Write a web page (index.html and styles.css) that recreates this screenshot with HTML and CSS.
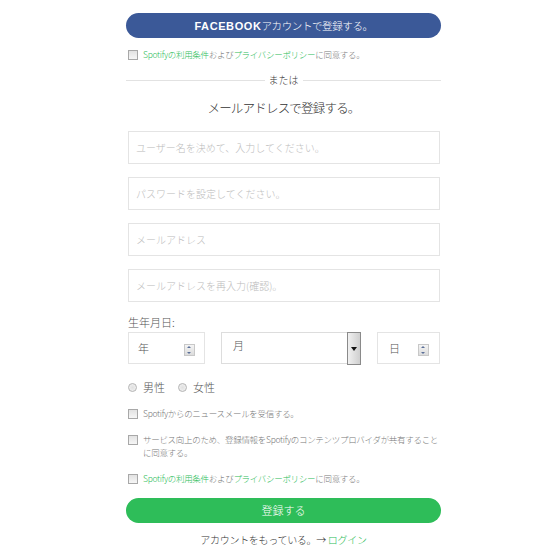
FILE: index.html
```html
<!DOCTYPE html>
<html lang="ja">
<head>
    <meta charset="UTF-8">
    <title>Spotify 登録</title>
    <link rel="stylesheet" href="styles.css">
</head>
<body>
    <div class="signup">
        <div class="btn btn-fb"><b>FACEBOOK</b>アカウントで登録する。</div>

        <div class="check-row first">
            <span class="box"></span>
            <span><a>Spotifyの利用条件</a>および<a>プライバシーポリシー</a>に同意する。</span>
        </div>

        <div class="divider"><span>または</span></div>

        <h1>メールアドレスで登録する。</h1>

        <div class="field">ユーザー名を決めて、入力してください。</div>
        <div class="field">パスワードを設定してください。</div>
        <div class="field">メールアドレス</div>
        <div class="field">メールアドレスを再入力(確認)。</div>

        <div class="dob-label">生年月日:</div>
        <div class="dob">
            <div class="spin year"><span>年</span><i class="spinner"></i></div>
            <div class="select month"><span>月</span><i class="drop"></i></div>
            <div class="spin day"><span>日</span><i class="spinner"></i></div>
        </div>

        <div class="gender">
            <label><span class="radio"></span>男性</label>
            <label><span class="radio"></span>女性</label>
        </div>

        <div class="check-row news">
            <span class="box"></span>
            <span>Spotifyからのニュースメールを受信する。</span>
        </div>
        <div class="check-row share">
            <span class="box"></span>
            <span>サービス向上のため、登録情報をSpotifyのコンテンツプロバイダが共有することに同意する。</span>
        </div>
        <div class="check-row terms">
            <span class="box"></span>
            <span><a>Spotifyの利用条件</a>および<a>プライバシーポリシー</a>に同意する。</span>
        </div>

        <div class="btn btn-green">登録する</div>

        <p class="login">アカウントをもっている。→ <a>ログイン</a></p>
    </div>
</body>
</html>
```

FILE: styles.css
```css
body {
    margin: 0;
    padding: 0 0 0 7px;
    background: #fff;
    font-family: "Noto Sans CJK JP", "Noto Sans", sans-serif;
    font-weight: 300;
    color: #555;
}
.signup {
    width: 315px;
    margin: 0 auto;
    padding-top: 13px;
}
a {
    color: #2ebd59;
}
.btn {
    height: 25px;
    line-height: 25px;
    border-radius: 13px;
    text-align: center;
    color: #fff;
    font-size: 11px;
}
.btn-fb {
    background: #3b5998;
    font-size: 10.5px;
    letter-spacing: -0.4px;
}
.btn-fb b {
    font-family: "Liberation Sans", Arial, sans-serif;
    font-weight: 700;
    font-size: 11px;
    letter-spacing: 0.6px;
}
.btn-green {
    background: #2ebd59;
    margin-top: 13px;
}
.check-row {
    display: flex;
    align-items: flex-start;
    margin-left: 2px;
    font-size: 8.5px;
    letter-spacing: -0.3px;
    line-height: 13px;
    color: #777;
}
.check-row .box {
    flex: none;
    width: 8px;
    height: 8px;
    margin: 2px 5px 0 0;
    border: 1px solid #a8a8a8;
    background: linear-gradient(#e2e2e2, #f6f6f6);
}
.check-row.first {
    margin-top: 10px;
}
.check-row.news {
    margin-top: 13px;
}
.check-row.share {
    margin-top: 13px;
    padding-right: 2px;
}
.check-row.terms {
    margin-top: 13px;
}
.divider {
    position: relative;
    margin-top: 12px;
    height: 13px;
    text-align: center;
    font-size: 10px;
    line-height: 13px;
    color: #333;
}
.divider::before {
    content: "";
    position: absolute;
    left: 0;
    right: 0;
    top: 7px;
    border-top: 1px solid #e2e2e2;
}
.divider span {
    position: relative;
    background: #fff;
    padding: 0 4px;
}
h1 {
    margin: 12px 0 0;
    font-size: 12.5px;
    letter-spacing: -0.8px;
    line-height: 20px;
    font-weight: 300;
    text-align: center;
    color: #333;
}
.field {
    box-sizing: border-box;
    margin: 13px 0 0 2px;
    width: 312px;
    height: 33px;
    line-height: 31px;
    padding-left: 7px;
    border: 1px solid #e4e4e4;
    font-size: 10px;
    color: #bbb;
}
.dob-label {
    margin: 13px 0 0 2px;
    font-size: 11px;
    line-height: 14px;
    color: #555;
}
.dob {
    display: flex;
    gap: 16px;
    margin: 3px 0 0 2px;
}
.spin, .select {
    box-sizing: border-box;
    position: relative;
    height: 32px;
    border: 1px solid #e4e4e4;
    font-size: 11px;
    color: #555;
    line-height: 30px;
}
.spin.year {
    width: 77px;
    padding-left: 9px;
}
.spin.day {
    width: 63px;
    padding-left: 11px;
}
.select.month {
    width: 140px;
    padding-left: 11px;
    border-color: #ddd;
    line-height: 24px;
}
.spinner {
    position: absolute;
    right: 9px;
    top: 11px;
    width: 9px;
    height: 10px;
    border: 1px solid #c8c8c8;
    background: linear-gradient(#f4f4f4, #dcdcdc);
}
.spin.day .spinner {
    right: 10px;
}
.spinner::before, .spinner::after {
    content: "";
    position: absolute;
    left: 2px;
    border-left: 2px solid transparent;
    border-right: 2px solid transparent;
}
.spinner::before {
    top: 1px;
    border-bottom: 2px solid #5a6f98;
}
.spinner::after {
    bottom: 1px;
    border-top: 2px solid #5a6f98;
}
.drop {
    position: absolute;
    right: -1px;
    top: -1px;
    width: 12px;
    height: 31px;
    border: 1px solid #8a8a8a;
    background: linear-gradient(90deg, #f0f0f0, #cfcfcf);
}
.drop::after {
    content: "";
    position: absolute;
    left: 3px;
    top: 14px;
    border-left: 3px solid transparent;
    border-right: 3px solid transparent;
    border-top: 4px solid #111;
}
.gender {
    display: flex;
    gap: 13px;
    margin: 16px 0 0 2px;
    font-size: 11px;
    line-height: 14px;
    color: #555;
}
.gender label {
    display: flex;
    align-items: center;
}
.radio {
    width: 7px;
    height: 7px;
    margin-right: 6px;
    border: 1px solid #b4b4b4;
    border-radius: 50%;
    background: radial-gradient(#e0e0e0, #f4f4f4);
}
.login {
    margin: 10px 0 0;
    text-align: center;
    font-size: 10px;
    letter-spacing: -0.3px;
    line-height: 14px;
    color: #333;
}
```
